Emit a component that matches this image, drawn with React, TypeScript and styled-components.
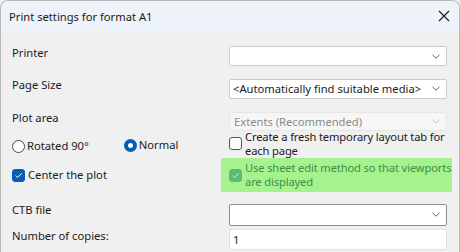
import React from "react";
import styled, { createGlobalStyle } from "styled-components";

const Global = createGlobalStyle`
  html, body { margin: 0; padding: 0; background: #f0f0f0; }
  body { font-family: "Noto Sans", "Open Sans", sans-serif; font-size: 11.2px; color: #1a1a1a; }
`;

const Window = styled.div`
  width: 460px;
  height: 252px;
  box-sizing: border-box;
  border: 1px solid #b9b9b9;
  border-bottom: none;
  border-radius: 8px 8px 0 0;
  background: #f0f0f0;
  overflow: hidden;
  display: flex;
  flex-direction: column;
`;

const TitleBar = styled.div`
  height: 30px;
  background: #eef2f9;
  display: flex;
  align-items: center;
  justify-content: space-between;
  padding: 0 9px 0 8px;
  flex-shrink: 0;
`;

const Title = styled.span`
  color: #1a1a1a;
  white-space: nowrap;
`;

const Close = styled.button`
  border: none;
  background: none;
  padding: 0;
  width: 12px;
  height: 12px;
  display: flex;
  align-items: center;
  justify-content: center;
`;

const Body = styled.div`
  flex: 1;
  padding: 14px 12px 0 11px;
  display: flex;
  flex-direction: column;
`;

const Row = styled.div<{ $h: number; $mt?: number }>`
  display: grid;
  grid-template-columns: 217px 218px;
  height: ${(p) => p.$h}px;
  margin-top: ${(p) => p.$mt ?? 0}px;
  align-items: center;
  white-space: nowrap;
`;

const Label = styled.div<{ $lift?: number }>`
  color: #1a1a1a;
  padding-bottom: ${(p) => p.$lift ?? 8}px;
`;

const SelectBox = styled.div<{ $disabled?: boolean; $dark?: boolean; $faint?: boolean; $h?: number }>`
  height: ${(p) => p.$h ?? 20}px;
  box-sizing: border-box;
  border: 1px solid
    ${(p) => (p.$dark ? "#8c8c8c" : p.$disabled ? "#e6e6e6" : p.$faint ? "#e2e2e2" : "#cccccc")};
  border-radius: 2px;
  background: ${(p) => (p.$disabled ? "#f6f6f6" : "#ffffff")};
  display: flex;
  align-items: center;
  justify-content: space-between;
  padding: 0 6px 0 ${(p) => (p.$disabled ? 4 : 3)}px;
  color: ${(p) => (p.$disabled ? "#8a8a8a" : "#1a1a1a")};
`;

const Chevron = ({ color }: { color: string }) => (
  <svg width="8" height="5" viewBox="0 0 8 5">
    <path d="M0.5 0.8 L4 4.2 L7.5 0.8" fill="none" stroke={color} strokeWidth="1" />
  </svg>
);

const OptionRow = styled.div<{ $mt?: number }>`
  display: flex;
  align-items: center;
  margin-top: ${(p) => p.$mt ?? 0}px;
`;

const RadioCircle = styled.span<{ $on?: boolean }>`
  width: 13px;
  height: 13px;
  box-sizing: border-box;
  border-radius: 50%;
  border: ${(p) => (p.$on ? "4px solid #005fb8" : "1px solid #4a4a4a")};
  background: #fff;
  flex-shrink: 0;
  margin-right: 2px;
`;

const Box = styled.span<{ $checked?: boolean; $tint?: boolean }>`
  width: 13px;
  height: 13px;
  box-sizing: border-box;
  border-radius: 3px;
  flex-shrink: 0;
  margin-right: 3px;
  display: flex;
  align-items: center;
  justify-content: center;
  border: 1px solid ${(p) => (p.$tint ? "#5cb97b" : p.$checked ? "#005fb8" : "#555")};
  background: ${(p) => (p.$tint ? "#5cb97b" : p.$checked ? "#005fb8" : "#fdfdfd")};
`;

const Check = ({ color }: { color: string }) => (
  <svg width="9" height="7" viewBox="0 0 9 7">
    <path d="M1.5 3.6 L3.6 5.6 L7.6 1.4" fill="none" stroke={color} strokeWidth="1" />
  </svg>
);

const OptText = styled.span<{ $green?: boolean; $tight?: boolean }>`
  line-height: 14px;
  letter-spacing: ${(p) => (p.$tight ? "-0.15px" : "0")};
  color: ${(p) => (p.$green ? "#3f8f45" : "#1a1a1a")};
`;

const RadioGroup = styled.div`
  display: flex;
  align-items: flex-start;
  gap: 35px;
  align-self: start;
`;

const Highlight = styled.div`
  background: #a6f28f;
  margin: 0 -5px 0 -8px;
  padding: 0 5px 0 8px;
  height: 34px;
  box-sizing: border-box;
  display: flex;
  align-items: center;
`;

export default function App() {
  return (
    <>
      <Global />
      <Window>
        <TitleBar>
          <Title>Print settings for format A1</Title>
          <Close>
            <svg width="12" height="12" viewBox="0 0 12 12">
              <path d="M1 1 L11 11 M11 1 L1 11" stroke="#1a1a1a" strokeWidth="1.1" />
            </svg>
          </Close>
        </TitleBar>
        <Body>
          <Row $h={20}>
            <Label $lift={7}>Printer</Label>
            <SelectBox>
              <span />
              <Chevron color="#606060" />
            </SelectBox>
          </Row>
          <Row $h={20} $mt={12}>
            <Label>Page Size</Label>
            <SelectBox>
              <span>&lt;Automatically find suitable media&gt;</span>
              <Chevron color="#606060" />
            </SelectBox>
          </Row>
          <Row $h={19} $mt={13}>
            <Label>Plot area</Label>
            <SelectBox $disabled $h={19}>
              <span>Extents (Recommended)</span>
              <Chevron color="#c4c4c4" />
            </SelectBox>
          </Row>
          <Row $h={29}>
            <RadioGroup>
              <OptionRow $mt={10}>
                <RadioCircle />
                <OptText>Rotated 90°</OptText>
              </OptionRow>
              <OptionRow $mt={9}>
                <RadioCircle $on />
                <OptText>Normal</OptText>
              </OptionRow>
            </RadioGroup>
            <OptionRow>
              <Box />
              <OptText $tight>
                Create a fresh temporary layout tab for
                <br />
                each page
              </OptText>
            </OptionRow>
          </Row>
          <Row $h={34}>
            <OptionRow>
              <Box $checked>
                <Check color="#ffffff" />
              </Box>
              <OptText>Center the plot</OptText>
            </OptionRow>
            <Highlight>
              <OptionRow>
                <Box $tint>
                  <Check color="#c8f0d0" />
                </Box>
                <OptText $green $tight>
                  Use sheet edit method so that viewports
                  <br />
                  are displayed
                </OptText>
              </OptionRow>
            </Highlight>
          </Row>
          <Row $h={22} $mt={10}>
            <Label $lift={10}>CTB file</Label>
            <SelectBox $dark $h={22}>
              <span />
              <Chevron color="#606060" />
            </SelectBox>
          </Row>
          <Row $h={21} $mt={4}>
            <Label $lift={7}>Number of copies:</Label>
            <SelectBox $faint $h={21}>
              <span>1</span>
            </SelectBox>
          </Row>
        </Body>
      </Window>
    </>
  );
}
